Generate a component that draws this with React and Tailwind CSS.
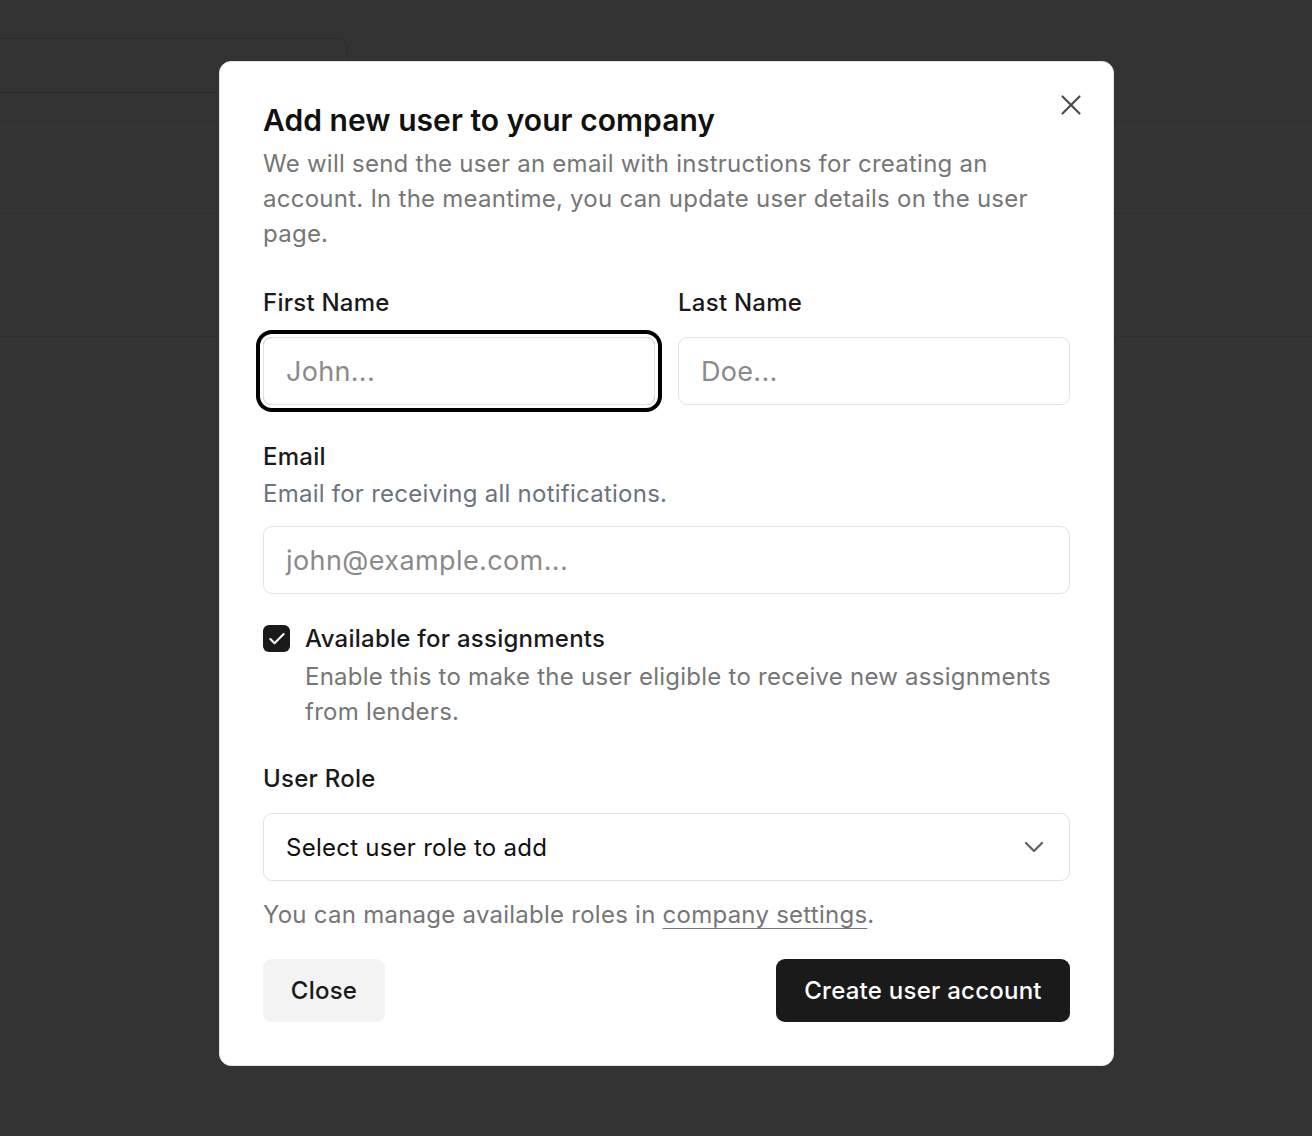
import React from "react";
import { X, ChevronDown, Check } from "lucide-react";

export default function App() {
  return (
    <div
      className="relative w-[1312px] h-[1136px] overflow-hidden bg-[#333333]"
      style={{ fontFamily: "Inter, 'Noto Sans', sans-serif" }}
    >
      {/* faint page underneath */}
      <div className="flex flex-col">
        <div className="h-[38px]" />
        <div className="w-[348px] rounded-tr-[10px] border-t border-r border-[#2c2c2c]">
          <div className="h-[54px] border-b border-[#2c2c2c]" />
          <div className="h-[28px]" />
        </div>
        <div className="h-[93px] border-t border-b border-[#2e2e2e]" />
        <div className="h-[123px] border-b border-[#2e2e2e]" />
      </div>

      {/* modal */}
      <div className="absolute left-[219px] top-[61px] w-[895px] rounded-[12px] border border-[#e4e4e4] bg-white px-[43px] pt-[40px] pb-[43px] tracking-[0.25px]">
        <button className="absolute right-[25px] top-[26px] flex h-[34px] w-[34px] items-center justify-center text-[#4a4a4a]">
          <X size={34} strokeWidth={1.5} />
        </button>

        <h2 className="text-[30px] font-semibold leading-[36px] tracking-[0.05px] text-[#111]">
          Add new user to your company
        </h2>
        <p className="mt-[8px] text-[24px] leading-[35px] text-[#767676]">
          We will send the user an email with instructions for creating an account. In the meantime, you can update user details on the user page.
        </p>

        <div className="mt-[35px] grid grid-cols-2 gap-x-[23px]">
          <div className="flex flex-col">
            <label className="text-[24px] font-medium leading-[33px] text-[#1a1a1a]">First Name</label>
            <div className="mt-[18px] flex h-[68px] items-center rounded-[9px] border border-[#e2e2e2] px-[22px] pt-[2px] text-[27px] tracking-[0.3px] text-[#8a8a8a] ring-[4px] ring-black ring-offset-[3px] ring-offset-white">
              John...
            </div>
          </div>
          <div className="flex flex-col">
            <label className="text-[24px] font-medium leading-[33px] text-[#1a1a1a]">Last Name</label>
            <div className="mt-[18px] flex h-[68px] items-center rounded-[9px] border border-[#e2e2e2] px-[22px] pt-[2px] text-[27px] tracking-[0.3px] text-[#8a8a8a]">
              Doe...
            </div>
          </div>
        </div>

        <div className="mt-[35px] flex flex-col">
          <label className="text-[24px] font-medium leading-[33px] text-[#1a1a1a]">Email</label>
          <p className="mt-[3px] text-[24px] leading-[35px] text-[#6b7280]">Email for receiving all notifications.</p>
          <div className="mt-[15px] flex h-[68px] items-center rounded-[9px] border border-[#e2e2e2] px-[22px] pt-[2px] text-[27px] tracking-[0.4px] text-[#8a8a8a]">
            john@example.com...
          </div>
        </div>

        <div className="mt-[28px] flex items-start gap-[15px]">
          <div className="mt-[3px] flex h-[27px] w-[27px] shrink-0 items-center justify-center rounded-[6px] bg-[#1a1a1a] text-white">
            <Check size={20} strokeWidth={2.5} />
          </div>
          <div className="flex flex-col">
            <span className="text-[24px] font-medium leading-[33px] text-[#1a1a1a]">Available for assignments</span>
            <span className="mt-[4px] text-[24px] leading-[35px] text-[#767676]">
              Enable this to make the user eligible to receive new assignments from lenders.
            </span>
          </div>
        </div>

        <div className="mt-[33px] flex flex-col">
          <label className="text-[24px] font-medium leading-[33px] text-[#1a1a1a]">User Role</label>
          <div className="mt-[18px] flex h-[68px] items-center justify-between rounded-[9px] border border-[#e2e2e2] pl-[22px] pr-[19px]">
            <span className="pt-[1px] text-[24px] text-[#111]">Select user role to add</span>
            <ChevronDown size={32} strokeWidth={1.8} className="text-[#666]" />
          </div>
          <p className="mt-[16px] text-[24px] leading-[35px] text-[#767676]">
            You can manage available roles in{" "}
            <span className="underline decoration-1 underline-offset-[5px]">company settings</span>.
          </p>
        </div>

        <div className="mt-[27px] flex items-center justify-between">
          <button className="h-[63px] w-[122px] rounded-[9px] bg-[#f3f3f3] text-[24px] font-medium text-[#1a1a1a]">
            Close
          </button>
          <button className="h-[63px] w-[294px] rounded-[9px] bg-[#1a1a1a] text-[24px] font-medium text-white">
            Create user account
          </button>
        </div>
      </div>
    </div>
  );
}
